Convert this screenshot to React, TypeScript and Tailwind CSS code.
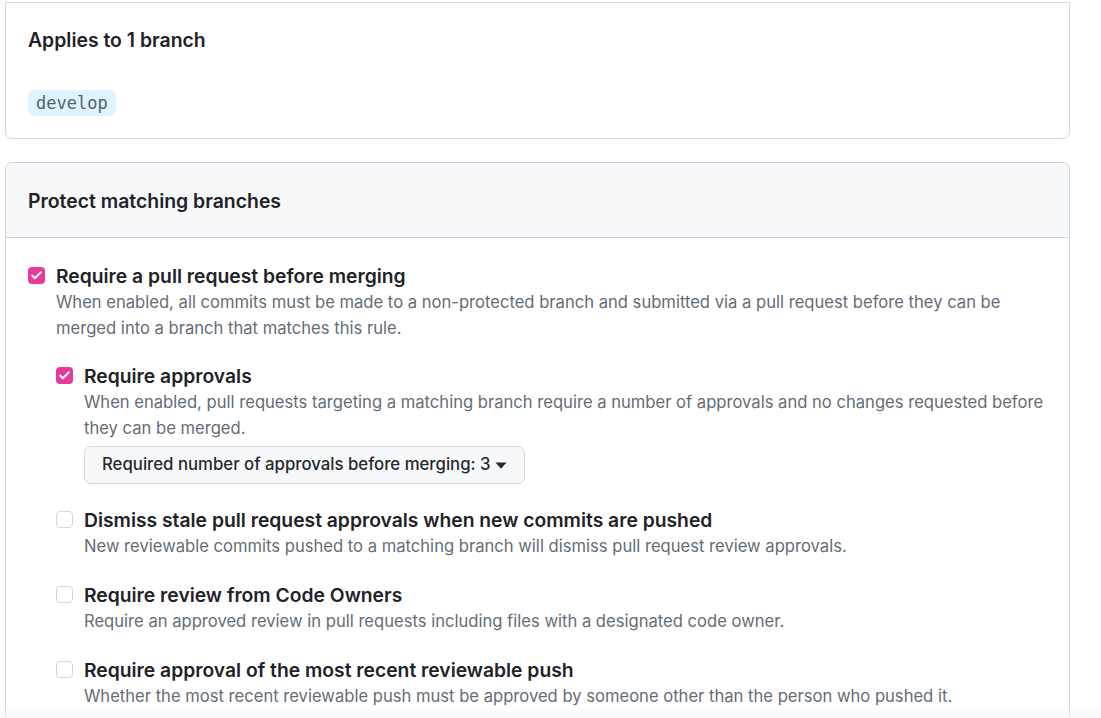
import { Check } from "lucide-react";

const font = { fontFamily: "Inter, 'Noto Sans', sans-serif" };

type RowProps = {
  checked?: boolean;
  title: string;
  desc: string;
  children?: React.ReactNode;
};

const Box = ({ checked }: { checked?: boolean }) =>
  checked ? (
    <span className="mt-[4px] flex h-[17px] w-[17px] shrink-0 items-center justify-center rounded-[4px] bg-[#e8399c]">
      <Check className="h-[13px] w-[13px] text-white" strokeWidth={3.5} />
    </span>
  ) : (
    <span className="mt-[4px] h-[17px] w-[17px] shrink-0 rounded-[4px] border border-[#d3d7db] bg-white" />
  );

const Row = ({ checked, title, desc, children }: RowProps) => (
  <div className="flex gap-[11px]">
    <Box checked={checked} />
    <div className="flex-1">
      <div className="text-[19.3px] font-semibold leading-[26px] text-[#1f2328]">{title}</div>
      <p className="text-[16.6px] leading-[26px] text-[#656d76]">{desc}</p>
      {children}
    </div>
  </div>
);

export default function App() {
  return (
    <div className="min-h-[718px] bg-white px-[5px] pt-[2px] pr-[31px]" style={font}>
      <div className="rounded-b-[7px] border border-[#d0d7de] px-[22px] pt-[22px] pb-[22px]">
        <h2 className="text-[19.4px] font-semibold leading-[30px] text-[#1f2328]">Applies to 1 branch</h2>
        <div className="mt-[35px] flex">
          <span
            className="rounded-[7px] bg-[#ddf4ff] px-[8px] text-[17px] leading-[26px] text-[#57606a]"
            style={{ fontFamily: "'DejaVu Sans Mono', 'Liberation Mono', monospace" }}
          >
            develop
          </span>
        </div>
      </div>

      <div className="mt-[23px] rounded-t-[7px] border border-b-0 border-[#d0d7de]">
        <div className="flex h-[75px] items-center rounded-t-[7px] border-b border-[#d0d7de] bg-[#f6f8fa] px-[22px] pt-[3px]">
          <h2 className="text-[19.4px] font-semibold text-[#1f2328]">Protect matching branches</h2>
        </div>
        <div className="px-[22px] pt-[25px] pb-[40px]">
          <Row
            checked
            title="Require a pull request before merging"
            desc="When enabled, all commits must be made to a non-protected branch and submitted via a pull request before they can be merged into a branch that matches this rule."
          >
            <div className="mt-[22px] flex flex-col gap-[23px]">
              <Row
                checked
                title="Require approvals"
                desc="When enabled, pull requests targeting a matching branch require a number of approvals and no changes requested before they can be merged."
              >
                <button className="mt-[5px] flex h-[38px] items-center gap-[4px] rounded-[7px] border border-[#d0d7de] bg-[#f6f8fa] px-[17px] text-[16.75px] font-medium text-[#24292f]">
                  Required number of approvals before merging: 3
                  <svg width="12" height="7" viewBox="0 0 12 7" fill="currentColor">
                    <path d="M0.5 0.5h11l-5.1 5.8a0.5 0.5 0 0 1-0.8 0Z" />
                  </svg>
                </button>
              </Row>
              <Row
                title="Dismiss stale pull request approvals when new commits are pushed"
                desc="New reviewable commits pushed to a matching branch will dismiss pull request review approvals."
              />
              <Row
                title="Require review from Code Owners"
                desc="Require an approved review in pull requests including files with a designated code owner."
              />
              <Row
                title="Require approval of the most recent reviewable push"
                desc="Whether the most recent reviewable push must be approved by someone other than the person who pushed it."
              />
            </div>
          </Row>
        </div>
      </div>
      <div className="pointer-events-none fixed inset-x-0 bottom-0 h-[14px] bg-gradient-to-b from-transparent to-[#f3f4f6]/70" />
    </div>
  );
}
